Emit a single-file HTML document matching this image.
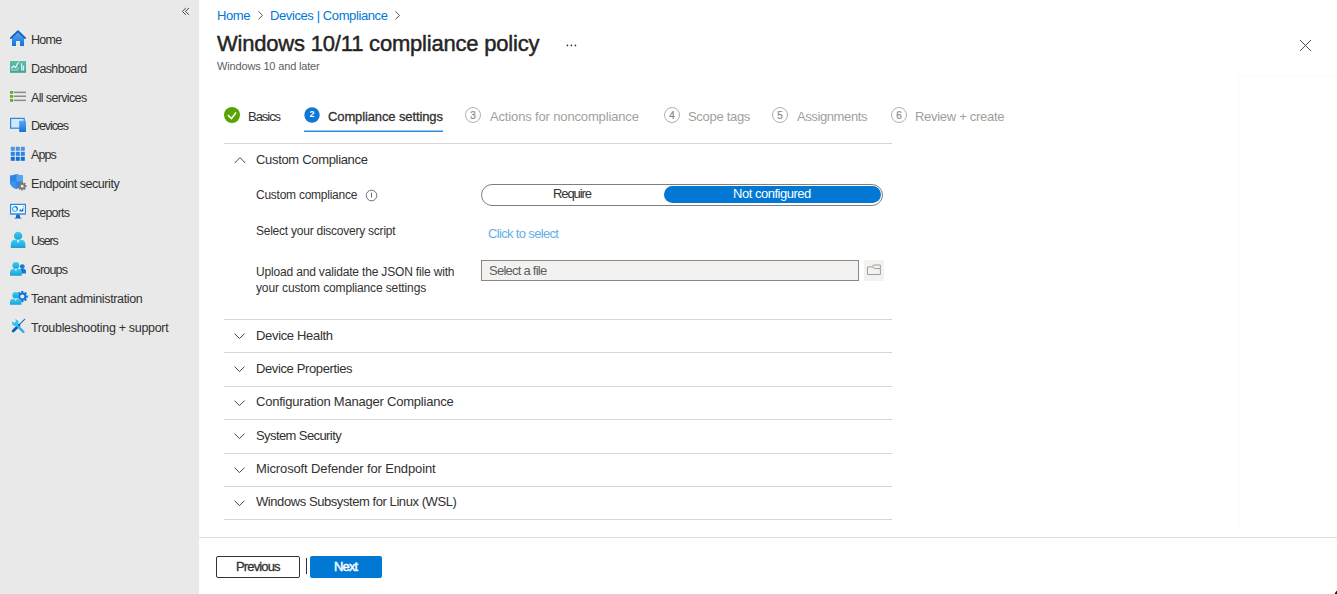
<!DOCTYPE html>
<html><head><meta charset="utf-8">
<style>
html,body{margin:0;padding:0;}
body{width:1337px;height:594px;overflow:hidden;background:#fff;position:relative;font-family:"Liberation Sans",sans-serif;color:#323130;}
.a{position:absolute;white-space:nowrap;line-height:16px;font-size:13px;}
#side{position:absolute;left:0;top:0;width:199px;height:594px;background:#e9e9e9;}
.si{position:absolute;left:31px;font-size:12.5px;line-height:16px;color:#323130;white-space:nowrap;}
.ic{position:absolute;left:10px;}
.hl{position:absolute;left:224px;width:668px;height:1px;background:#d6d6d6;}
.acc{position:absolute;left:256px;font-size:13px;line-height:16px;white-space:nowrap;color:#323130;}
.car{position:absolute;left:234px;}
.tc{position:absolute;top:107px;width:14px;height:13px;padding-top:1px;border:1px solid #b3b0ad;border-radius:50%;font-size:10px;line-height:13px;text-align:center;color:#8a8886;-webkit-text-stroke:0.2px #8a8886;}
.tt{position:absolute;top:109px;font-size:13px;line-height:16px;color:#a19f9d;white-space:nowrap;}
</style></head>
<body>
<div id="side">
  <svg style="position:absolute;left:178px;top:5px" width="14" height="13" viewBox="178 5 14 13"><path d="M185.8 8 L182.4 11.4 L185.8 14.8 M188.9 8 L185.5 11.4 L188.9 14.8" fill="none" stroke="#484644" stroke-width="1"/></svg>
  
  <svg style="position:absolute;left:0;top:0" width="199" height="340" viewBox="0 0 199 340">
    <defs>
      <linearGradient id="gb" x1="0" y1="0" x2="0" y2="1"><stop offset="0" stop-color="#5ea6f2"/><stop offset="1" stop-color="#1273dc"/></linearGradient>
      <linearGradient id="gc" x1="0" y1="0" x2="0" y2="1"><stop offset="0" stop-color="#3ccdf4"/><stop offset="1" stop-color="#1a9fd6"/></linearGradient>
      <linearGradient id="gt" x1="0" y1="0" x2="0" y2="1"><stop offset="0" stop-color="#5cbfae"/><stop offset="1" stop-color="#3fa08e"/></linearGradient>
    </defs>
    <!-- home -->
    <path d="M12 37 L18 31.5 L24 37 V46 H20 V41 H16 V46 H12 Z" fill="url(#gb)"/>
    <path d="M10.8 38.2 L18 31.2 L25.2 38.2" fill="none" stroke="#0f5fb8" stroke-width="1.7" stroke-linecap="round" stroke-linejoin="round"/>
    <!-- dashboard -->
    <rect x="10" y="61" width="16" height="11.8" fill="url(#gt)"/>
    <path d="M11.5 68.5 L13.5 66 L15.5 67.5 L18 63" fill="none" stroke="#fff" stroke-width="1.1"/>
    <path d="M11.2 66.6 L12.6 68.4 M16.6 66.8 L18.6 69 M17.4 63.4 L19.6 61.8" fill="none" stroke="#e8f6f3" stroke-width="0.8"/>
    <rect x="11.2" y="69.6" width="7.4" height="0.9" fill="#c9ebe4"/>
    <rect x="21" y="63.2" width="1.2" height="7.4" fill="#d6f0ea"/>
    <rect x="22.6" y="65.6" width="1.6" height="5" fill="#d6f0ea"/>
    <!-- all services -->
    <rect x="10" y="91" width="3" height="2.8" fill="#5bb12a"/>
    <rect x="10" y="95" width="3" height="2.8" fill="#5bb12a"/>
    <rect x="10" y="99" width="3" height="2.8" fill="#5bb12a"/>
    <rect x="13.7" y="91.6" width="12.3" height="1.5" fill="#8c8c8c"/>
    <rect x="13.7" y="95.5" width="12.3" height="1.5" fill="#8c8c8c"/>
    <rect x="13.7" y="99.6" width="12.3" height="1.5" fill="#8c8c8c"/>
    <!-- devices -->
    <rect x="10.6" y="118.4" width="13.6" height="9.8" fill="#cfe8fb" stroke="#2b86e4" stroke-width="1.2"/>
    <rect x="19.2" y="120.8" width="6.8" height="11.2" rx="0.6" fill="url(#gb)"/>
    <!-- apps -->
    <g>
      <rect x="10.8" y="146.8" width="4" height="4" fill="#4a95ea"/><rect x="15.8" y="146.8" width="4" height="4" fill="#4a95ea"/><rect x="20.8" y="146.8" width="4" height="4" fill="#4a95ea"/>
      <rect x="10.8" y="151.8" width="4" height="4" fill="#2b83e2"/><rect x="15.8" y="151.8" width="4" height="4" fill="#2b83e2"/><rect x="20.8" y="151.8" width="4" height="4" fill="#2b83e2"/>
      <rect x="10.8" y="156.8" width="4" height="4" fill="#0f70d8"/><rect x="15.8" y="156.8" width="4" height="4" fill="#0f70d8"/><rect x="20.8" y="156.8" width="4" height="4" fill="#0f70d8"/>
    </g>
    <!-- endpoint security -->
    <path d="M10 175.5 Q14 175 16.4 174 Q19 175 22.8 175.5 V182 Q22.8 186.5 16.4 189 Q10 186.5 10 182 Z" fill="#2a86e6"/>
    <path d="M16.4 174 Q19 175 22.8 175.5 V181.5 H16.4 Z" fill="#5aa3f0"/>
    <path d="M10 181.5 H16.4 V189 Q10 186.5 10 182 Z" fill="#3d93ea"/>
    <g transform="translate(22.2 186.2)">
      <circle r="3.3" fill="#7a7a7a"/>
      <path d="M-0.9 -4.4 H0.9 V4.4 H-0.9 Z M-4.4 -0.9 V0.9 H4.4 V-0.9 Z" fill="#7a7a7a"/>
      <path d="M-0.9 -4.4 H0.9 V4.4 H-0.9 Z M-4.4 -0.9 V0.9 H4.4 V-0.9 Z" fill="#7a7a7a" transform="rotate(45)"/>
      <circle r="1.4" fill="#e9e9e9"/>
    </g>
    <!-- reports -->
    <rect x="10.6" y="204.4" width="14.8" height="9.6" fill="#fff" stroke="#2d83dc" stroke-width="1.2"/>
    <rect x="10" y="213.2" width="16" height="1.4" fill="#5d9fe6"/>
    <path d="M16.4 214.6 H19.6 L20.2 217.4 L22 218.4 H14 L15.8 217.4 Z" fill="#1368c4"/>
    <circle cx="15" cy="209" r="2.4" fill="none" stroke="#35c5f3" stroke-width="1.3"/>
    <path d="M15 206.6 A2.4 2.4 0 0 1 17.2 210" fill="none" stroke="#1a86dc" stroke-width="1.3"/>
    <path d="M19.2 211.5 L20 209 L21.5 210.2 L23.4 207.2 V211.5 Z" fill="#1f6fc0"/>
    <circle cx="23.4" cy="206.6" r="0.7" fill="#35c5f3"/>
    <!-- users -->
    <circle cx="18.1" cy="235.9" r="4.2" fill="url(#gc)"/>
    <path d="M10.8 248 V245 Q10.8 239.8 15.5 239.8 H20.7 Q25.4 239.8 25.4 245 V248 Z" fill="url(#gc)"/>
    <path d="M16.6 239.8 H19.6 L18.1 243.4 Z" fill="#d8f4fd"/>
    <!-- groups -->
    <circle cx="22.3" cy="266.6" r="2.4" fill="#1278d6"/>
    <path d="M19.4 273.6 V271.5 Q19.4 268.7 22 268.7 H23.2 Q26 268.7 26 271.5 V273.6 Z" fill="#1278d6"/>
    <circle cx="15.9" cy="265.5" r="3.4" fill="url(#gc)"/>
    <path d="M10 275.8 V273 Q10 268.8 14 268.8 H17.8 Q21.8 268.8 21.8 273 V275.8 Z" fill="url(#gc)"/>
    <path d="M14.8 268.8 H17 L15.9 271.4 Z" fill="#d8f4fd"/>
    <!-- tenant admin -->
    <g transform="translate(22.3 296.6)">
      <circle r="4" fill="#1278d6"/>
      <g fill="#1278d6"><rect x="-1.1" y="-5.6" width="2.2" height="11.2"/><rect x="-5.6" y="-1.1" width="11.2" height="2.2"/><rect x="-1.1" y="-5.6" width="2.2" height="11.2" transform="rotate(45)"/><rect x="-1.1" y="-5.6" width="2.2" height="11.2" transform="rotate(-45)"/></g>
      <circle r="2" fill="#e9e9e9"/>
    </g>
    <circle cx="15.7" cy="295.3" r="3.3" fill="url(#gc)"/>
    <path d="M10 304.8 V302 Q10 298.7 13.6 298.7 H17.8 Q21.4 298.7 21.4 302 V304.8 Z" fill="url(#gc)"/>
    <path d="M14.6 298.7 H16.8 L15.7 301.2 Z" fill="#d8f4fd"/>
    <!-- troubleshooting -->
    <path d="M24.6 319.4 L18.6 325.4" stroke="#1d6fc4" stroke-width="1.2" stroke-linecap="round"/>
    <path d="M19 325.2 L13.2 331" stroke="#0d5db3" stroke-width="2.8" stroke-linecap="round"/>
    <path d="M15.5 324 L23.4 331.8" stroke="#2bb0e6" stroke-width="2.4" stroke-linecap="round"/>
    <circle cx="15.3" cy="322.7" r="3.2" fill="#35c2f2"/><path d="M11 320.4 L14.4 323 L16.2 321 L13.4 317.8 Z" fill="#e9e9e9"/>
  </svg>
  <div class="si" id="s1" style="top:32px;letter-spacing:-0.74px">Home</div>
  <div class="si" id="s2" style="top:61px;letter-spacing:-0.62px">Dashboard</div>
  <div class="si" id="s3" style="top:90px;letter-spacing:-0.64px">All services</div>
  <div class="si" id="s4" style="top:118px;letter-spacing:-1.08px">Devices</div>
  <div class="si" id="s5" style="top:147px;letter-spacing:-0.93px">Apps</div>
  <div class="si" id="s6" style="top:176px;letter-spacing:-0.45px">Endpoint security</div>
  <div class="si" id="s7" style="top:205px;letter-spacing:-0.79px">Reports</div>
  <div class="si" id="s8" style="top:233px;letter-spacing:-1.22px">Users</div>
  <div class="si" id="s9" style="top:262px;letter-spacing:-0.80px">Groups</div>
  <div class="si" id="s10" style="top:291px;letter-spacing:-0.35px">Tenant administration</div>
  <div class="si" id="s11" style="top:320px;letter-spacing:-0.31px">Troubleshooting + support</div>
</div>

<!-- breadcrumb -->
<div class="a" id="bc1" style="left:217px;top:8px;color:#0078d4;letter-spacing:-0.41px">Home</div>
<svg style="position:absolute;left:255px;top:9px" width="10" height="13" viewBox="255 9 10 13"><path d="M258.4 11.4 L262.6 15.4 L258.4 19.4" fill="none" stroke="#484644" stroke-width="0.9"/></svg>
<div class="a" id="bc2" style="left:270px;top:8px;color:#0078d4;letter-spacing:-0.40px">Devices | Compliance</div>
<svg style="position:absolute;left:392px;top:9px" width="10" height="13" viewBox="392 9 10 13"><path d="M395.4 11.4 L399.6 15.4 L395.4 19.4" fill="none" stroke="#484644" stroke-width="0.9"/></svg>

<div class="a" id="title" style="left:217px;top:32px;font-size:22px;line-height:24px;color:#252423;-webkit-text-stroke:0.45px #252423;letter-spacing:-0.20px">Windows 10/11 compliance policy</div>
<svg style="position:absolute;left:560px;top:40px" width="20" height="10" viewBox="560 40 20 10"><circle cx="567.4" cy="45.4" r="0.85" fill="#323130"/><circle cx="571.4" cy="45.4" r="0.85" fill="#323130"/><circle cx="575.4" cy="45.4" r="0.85" fill="#323130"/></svg>
<div class="a" id="sub" style="left:217px;top:59px;font-size:11px;line-height:14px;color:#605e5c;letter-spacing:-0.16px">Windows 10 and later</div>

<svg style="position:absolute;left:1299px;top:39px" width="13" height="13" viewBox="0 0 13 13"><path d="M1 1 L12 12 M12 1 L1 12" fill="none" stroke="#3b3a39" stroke-width="0.9"/></svg>

<!-- tabs -->
<svg style="position:absolute;left:224px;top:107px" width="16" height="16" viewBox="0 0 16 16"><circle cx="8" cy="8" r="8" fill="#57a300"/><path d="M3.9 8.1 L7.5 11.6 L12 5.5" fill="none" stroke="#fff" stroke-width="1.6"/></svg>
<div class="tt" id="tb1" style="left:248px;color:#323130;letter-spacing:-1.04px">Basics</div>
<svg style="position:absolute;left:304px;top:107px" width="16" height="16" viewBox="0 0 16 16"><circle cx="8" cy="8" r="7.7" fill="#0f78d4"/></svg>
<div style="position:absolute;left:304px;top:107px;width:16px;height:16px;font-size:9px;line-height:15px;text-align:center;color:#fff;font-weight:bold">2</div>
<div class="tt" id="tb2" style="left:328px;color:#323130;-webkit-text-stroke:0.3px #323130;letter-spacing:-0.12px">Compliance settings</div>
<div style="position:absolute;left:304px;top:130px;width:139px;height:1px;background:#9cc8f0"></div><div style="position:absolute;left:304px;top:131px;width:139px;height:1px;background:#2a86de"></div>
<div class="tc" style="left:465px">3</div>
<div class="tt" id="tb3" style="left:490px;letter-spacing:-0.15px">Actions for noncompliance</div>
<div class="tc" style="left:664px">4</div>
<div class="tt" id="tb4" style="left:688px;letter-spacing:-0.30px">Scope tags</div>
<div class="tc" style="left:772px">5</div>
<div class="tt" id="tb5" style="left:797px;letter-spacing:-0.40px">Assignments</div>
<div class="tc" style="left:891px">6</div>
<div class="tt" id="tb6" style="left:915px;letter-spacing:-0.29px">Review + create</div>
<div class="hl" style="top:143px"></div>

<!-- accordion -->
<svg class="car" style="top:156px" width="12" height="8" viewBox="0 0 12 8"><path d="M0.8 7 L6 1.5 L11.2 7" fill="none" stroke="#484644" stroke-width="1"/></svg>
<div class="acc" id="h0" style="top:152px;font-size:13px;letter-spacing:-0.32px">Custom Compliance</div>
<div class="acc" id="l1" style="top:187px;font-size:12px;letter-spacing:-0.25px">Custom compliance</div>
<svg style="position:absolute;left:365px;top:189px" width="13" height="13" viewBox="0 0 13 13"><circle cx="6.5" cy="6.5" r="5.3" fill="none" stroke="#605e5c" stroke-width="0.9"/><path d="M6.5 3.6 V8.7" stroke="#605e5c" stroke-width="0.9"/></svg>
<div class="acc" id="l2" style="top:223px;font-size:12px;letter-spacing:-0.24px">Select your discovery script</div>
<div class="acc" id="l3a" style="top:264px;font-size:12px;letter-spacing:-0.17px">Upload and validate the JSON file with</div>
<div class="acc" id="l3b" style="top:280px;font-size:12px;letter-spacing:-0.13px">your custom compliance settings</div>

<!-- toggle -->
<div style="position:absolute;left:481px;top:184px;width:400px;height:20px;border:1px solid #7f7f7f;border-radius:11px;"></div>
<div style="position:absolute;left:664px;top:186px;width:217px;height:17px;background:#0078d4;border-radius:9px;"></div>
<div class="a" id="req" style="left:553px;top:186px;color:#323130;letter-spacing:-1.08px">Require</div>
<div class="a" id="nc" style="left:733px;top:186px;color:#fff;letter-spacing:-0.48px">Not configured</div>

<div class="a" id="cts" style="left:488px;top:226px;color:#66aee5;letter-spacing:-0.66px">Click to select</div>

<div style="position:absolute;left:481px;top:260px;width:376px;height:19px;border:1px solid #8a8886;background:#f3f2f1"></div>
<div class="a" id="saf" style="left:489px;top:263px;color:#605e5c;letter-spacing:-0.75px">Select a file</div>
<div style="position:absolute;left:864px;top:260px;width:20px;height:21px;background:#f3f2f1"></div>
<svg style="position:absolute;left:864px;top:260px" width="20" height="21" viewBox="864 260 20 21"><path d="M867.5 266.9 H872.6 L874.2 268.6 H880.4 V274.5 H867.5 Z" fill="none" stroke="#a19f9d" stroke-width="1" stroke-linejoin="round"/><path d="M872.6 266.9 L873.4 265 H880.4 V268.6" fill="none" stroke="#a19f9d" stroke-width="1" stroke-linejoin="round"/></svg>

<div class="hl" style="top:319px"></div>
<svg class="car" style="top:333px" width="12" height="8" viewBox="0 0 12 8"><path d="M0.5 0.6 L5.5 5.6 L10.5 0.6" fill="none" stroke="#484644" stroke-width="1"/></svg>
<div class="acc" id="h1" style="top:328px;letter-spacing:-0.33px">Device Health</div>
<div class="hl" style="top:352px"></div>
<svg class="car" style="top:366px" width="12" height="8" viewBox="0 0 12 8"><path d="M0.5 0.6 L5.5 5.6 L10.5 0.6" fill="none" stroke="#484644" stroke-width="1"/></svg>
<div class="acc" id="h2" style="top:361px;letter-spacing:-0.38px">Device Properties</div>
<div class="hl" style="top:386px"></div>
<svg class="car" style="top:400px" width="12" height="8" viewBox="0 0 12 8"><path d="M0.5 0.6 L5.5 5.6 L10.5 0.6" fill="none" stroke="#484644" stroke-width="1"/></svg>
<div class="acc" id="h3" style="top:394px;letter-spacing:-0.22px">Configuration Manager Compliance</div>
<div class="hl" style="top:419px"></div>
<svg class="car" style="top:433px" width="12" height="8" viewBox="0 0 12 8"><path d="M0.5 0.6 L5.5 5.6 L10.5 0.6" fill="none" stroke="#484644" stroke-width="1"/></svg>
<div class="acc" id="h4" style="top:428px;letter-spacing:-0.59px">System Security</div>
<div class="hl" style="top:453px"></div>
<svg class="car" style="top:467px" width="12" height="8" viewBox="0 0 12 8"><path d="M0.5 0.6 L5.5 5.6 L10.5 0.6" fill="none" stroke="#484644" stroke-width="1"/></svg>
<div class="acc" id="h5" style="top:461px;letter-spacing:-0.13px">Microsoft Defender for Endpoint</div>
<div class="hl" style="top:486px"></div>
<svg class="car" style="top:500px" width="12" height="8" viewBox="0 0 12 8"><path d="M0.5 0.6 L5.5 5.6 L10.5 0.6" fill="none" stroke="#484644" stroke-width="1"/></svg>
<div class="acc" id="h6" style="top:494px;letter-spacing:-0.43px">Windows Subsystem for Linux (WSL)</div>
<div class="hl" style="top:519px"></div>

<!-- faint right panel -->
<div style="position:absolute;left:1238px;top:75px;width:99px;height:456px;background:#fefefe;border-left:1px solid #fbfbfb;border-top:1px solid #fbfbfb"></div>

<!-- footer -->
<div style="position:absolute;left:199px;top:537px;width:1138px;height:1px;background:#e1dfdd"></div>
<div style="position:absolute;left:216px;top:556px;width:82px;height:20px;border:1px solid #323130;border-radius:2px"></div>
<div class="a" id="prev" style="left:236px;top:559px;-webkit-text-stroke:0.3px #323130;letter-spacing:-0.86px">Previous</div>
<div style="position:absolute;left:306px;top:558px;width:1px;height:16px;background:#323130"></div>
<div style="position:absolute;left:310px;top:556px;width:72px;height:22px;background:#0078d4;border-radius:2px"></div>
<div class="a" id="next" style="left:334px;top:559px;-webkit-text-stroke:0.45px #fff;color:#fff;letter-spacing:-0.85px">Next</div>
<svg style="position:absolute;left:1333px;top:590px" width="4" height="4" viewBox="0 0 4 4"><path d="M4 0.5 L4 4 L1.5 4 Q2.5 1.5 4 0.5 Z" fill="#1b1a19"/></svg>
</body></html>
